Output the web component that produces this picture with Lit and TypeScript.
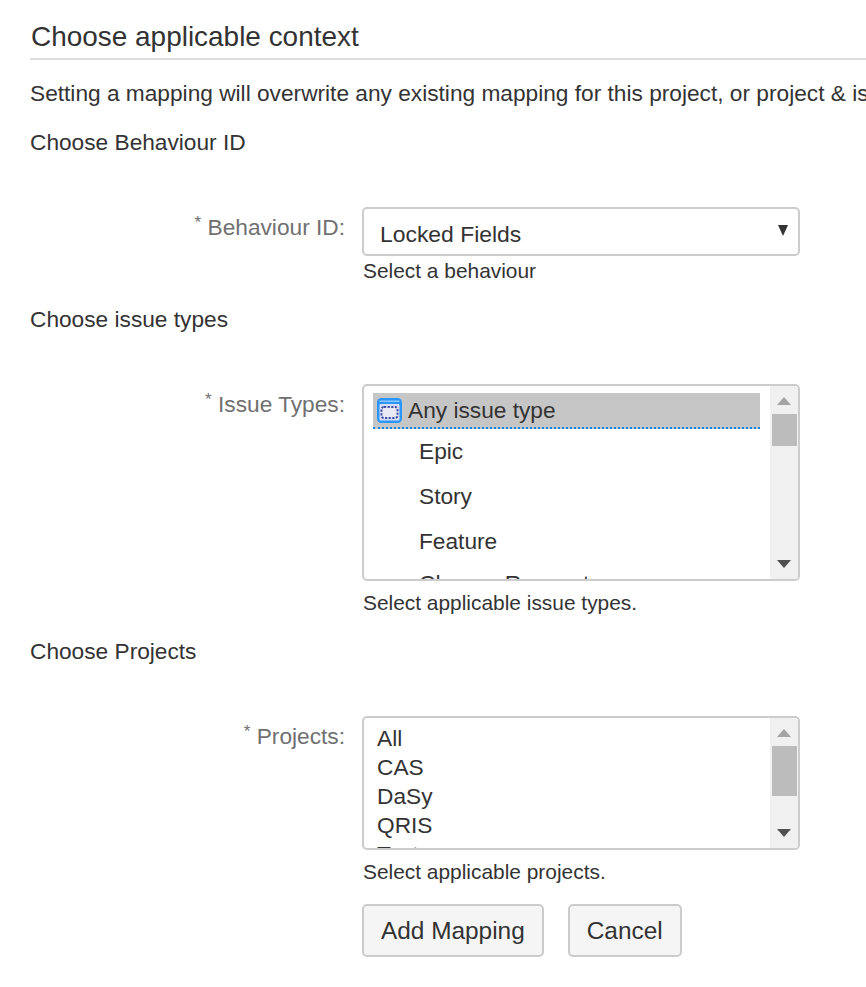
import { LitElement, html, css } from "lit";
import { customElement } from "lit/decorators.js";

const issueTypes = ["Epic", "Story", "Feature", "Change Request"];
const projects = ["All", "CAS", "DaSy", "QRIS", "Test"];

@customElement("app-root")
export class AppRoot extends LitElement {
  static styles = css`
    :host {
      display: block;
      width: 866px;
      height: 987px;
      overflow: hidden;
      background: #fff;
      color: #333;
      font-family: "Liberation Sans", Arial, sans-serif;
      font-size: 22.7px;
      line-height: 32px;
    }
    .page { padding: 18px 0 0 30px; width: 836px; }
    h2 {
      margin: 0;
      font-weight: 400;
      font-size: 27.95px;
      line-height: 38px;
      height: 40px;
      padding-left: 1px;
      border-bottom: 2px solid #ddd;
      white-space: nowrap;
    }
    .intro { margin: 17px 0 0; white-space: nowrap; }
    .section { margin: 17px 0 0; }
    .section.next { margin-top: 20px; }
    .row { display: flex; align-items: flex-start; margin-top: 49px; }
    .label {
      width: 315px;
      text-align: right;
      color: #707070;
      flex: none;
      margin-right: 17px;
      padding-top: 4px;
      white-space: nowrap;
    }
    .label sup {
      font-size: 17px;
      line-height: 0;
      vertical-align: 7px;
    }
    .field { width: 438px; flex: none; }
    .select {
      box-sizing: border-box;
      height: 49px;
      border: 2px solid #ccc;
      border-radius: 5px;
      display: flex;
      align-items: center;
      justify-content: space-between;
      padding: 4px 10px 0 16px;
      background: #fff;
      font-size: 22.9px;
    }
    .caret { display: block; margin-top: -6px; }
    .hint { font-size: 20.9px; line-height: 24px; margin-top: 10px; padding-left: 1px; }
    .select + .hint { margin-top: 3px; }
    .list {
      box-sizing: border-box;
      border: 2px solid #ccc;
      border-radius: 5px;
      display: flex;
      overflow: hidden;
      background: #fff;
    }
    .issues { height: 197px; }
    .projects { height: 134px; }
    .options { flex: 1; min-width: 0; overflow: hidden; }
    .issues .options { padding: 7px 10px 0 9px; }
    .any {
      display: flex;
      align-items: center;
      gap: 6px;
      height: 34px;
      padding-left: 4px;
      background: #c6c6c6;
      border-bottom: 2px dotted #0c84e4;
    }
    .issue { padding-left: 46px; height: 45px; line-height: 45px; white-space: nowrap; }
    .issue:last-child { margin-top: -3px; }
    .projects .options { padding: 6px 0 0 13px; }
    .project { height: 29px; line-height: 29px; }
    .bar {
      width: 28px;
      flex: none;
      background: #f0f0f0;
      display: flex;
      flex-direction: column;
      align-items: center;
    }
    .bar svg { display: block; flex: none; }
    .up { margin-top: 11px; }
    .thumb { width: 25px; background: #bcbcbc; flex: none; margin-top: 9px; }
    .issues .thumb { height: 32px; }
    .projects .thumb { height: 50px; }
    .spring { flex: 1; }
    .down { margin-bottom: 11px; }
    .buttons { display: flex; gap: 24px; margin-top: 20px; }
    button {
      box-sizing: border-box;
      height: 53px;
      border: 2px solid #ccc;
      border-radius: 5px;
      background: #f5f5f5;
      color: #333;
      font: inherit;
      font-size: 24.4px;
      padding: 0 17px;
    }
  `;

  private scrollbar() {
    return html`<div class="bar">
      <svg class="up" width="14" height="8" viewBox="0 0 14 8"><path d="M7 0 14 8H0Z" fill="#a3a3a3"></path></svg>
      <div class="thumb"></div>
      <div class="spring"></div>
      <svg class="down" width="14" height="8" viewBox="0 0 14 8"><path d="M0 0H14L7 8Z" fill="#505050"></path></svg>
    </div>`;
  }

  render() {
    return html`<div class="page">
      <h2>Choose applicable context</h2>
      <div class="intro">Setting a mapping will overwrite any existing mapping for this project, or project &amp; issue type</div>
      <div class="section">Choose Behaviour ID</div>
      <div class="row">
        <div class="label"><sup>*</sup> Behaviour ID:</div>
        <div class="field">
          <div class="select">
            <span>Locked Fields</span>
            <svg class="caret" width="10" height="11" viewBox="0 0 10 11"><path d="M0 0H10L5 11Z" fill="#333"></path></svg>
          </div>
          <div class="hint">Select a behaviour</div>
        </div>
      </div>
      <div class="section next">Choose issue types</div>
      <div class="row">
        <div class="label"><sup>*</sup> Issue Types:</div>
        <div class="field">
          <div class="list issues">
            <div class="options">
              <div class="any">
                <svg width="25" height="25" viewBox="0 0 25 25">
                  <rect x="0" y="0" width="25" height="25" rx="4.5" fill="#2a96fb"></rect>
                  <rect x="2.5" y="6" width="20" height="16.5" rx="1" fill="#d9dcf5"></rect>
                  <rect x="2.5" y="2.5" width="20" height="1.5" fill="#8cc8fd"></rect>
                  <rect x="4.5" y="9" width="16" height="11" rx="2.5" fill="#e9e9f6" stroke="#3a4fa8" stroke-width="2" stroke-dasharray="2.2 1.4"></rect>
                </svg>
                <span>Any issue type</span>
              </div>
              <div>
                ${issueTypes.map((t) => html`<div class="issue">${t}</div>`)}
              </div>
            </div>
            ${this.scrollbar()}
          </div>
          <div class="hint">Select applicable issue types.</div>
        </div>
      </div>
      <div class="section next">Choose Projects</div>
      <div class="row">
        <div class="label"><sup>*</sup> Projects:</div>
        <div class="field">
          <div class="list projects">
            <div class="options">
              ${projects.map((p) => html`<div class="project">${p}</div>`)}
            </div>
            ${this.scrollbar()}
          </div>
          <div class="hint">Select applicable projects.</div>
          <div class="buttons">
            <button>Add Mapping</button>
            <button>Cancel</button>
          </div>
        </div>
      </div>
    </div>`;
  }
}
